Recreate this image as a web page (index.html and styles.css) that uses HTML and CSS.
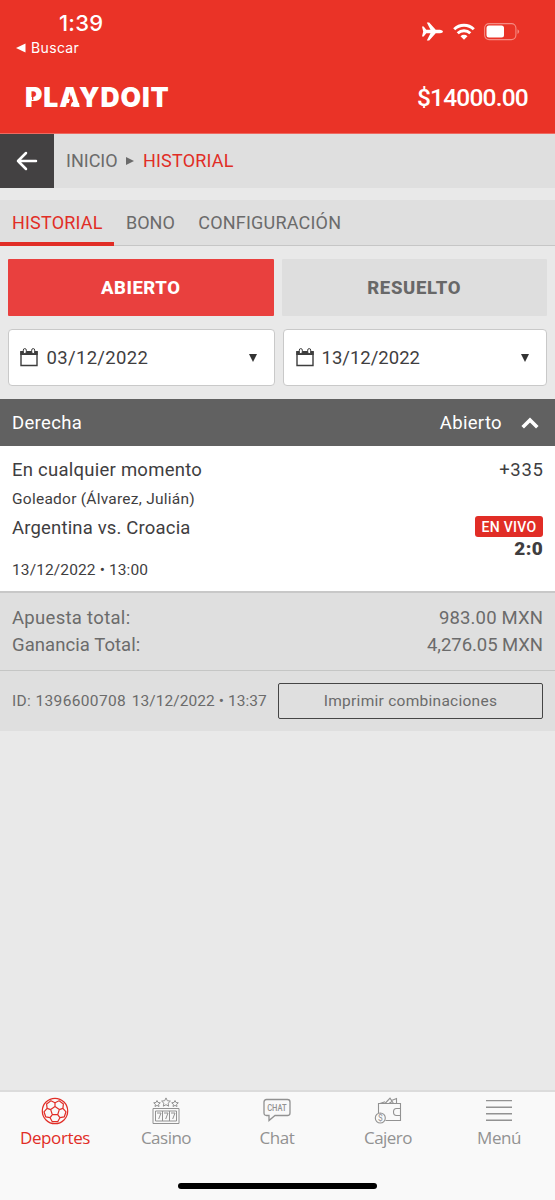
FILE: index.html
```html
<!DOCTYPE html>
<html lang="es">
<head>
<meta charset="utf-8">
<title>Playdoit – Historial</title>
<link rel="stylesheet" href="styles.css">
</head>
<body>
<div class="app">
  <header class="header">
    <div class="status">
      <div class="status-left">
        <span class="clock">1:39</span>
        <span class="back-app"><svg width="10" height="10" viewBox="0 0 10 10"><path d="M0 5 9.500 .5v9z" fill="#fff"/></svg><span class="search">Buscar</span></span>
      </div>
      <div class="status-icons">
        <svg width="21" height="19" viewBox="0 0 21 19"><path d="M0 4.500h1.700L4.300 7.700h4.200L4.800.5h2.400L13.700 7.700h4.300q3 .4 3 1.800t-3 1.800h-4.300L7.200 18.500H4.800L8.500 11.300H4.300l-2.600 3.200H0L1.200 9.500z" fill="#fff"/></svg>
        <svg class="wifi" width="22" height="17" viewBox="0 0 22 17" fill="none" stroke="#fff" stroke-width="2.900"><path d="M1.200 6.200a14 14 0 0 1 19.600 0M4.700 10.300a9 9 0 0 1 12.600 0"/><path d="M7.500 13.300a5 5 0 0 1 7 0L11 16.800z" fill="#fff" stroke="none"/></svg>
        <svg class="battery" width="36" height="18" viewBox="0 0 36 18"><rect x=".6" y=".6" width="31.300" height="16" rx="4.500" fill="none" stroke="#f58a82" stroke-width="1.100"/><rect x="2.500" y="2.500" width="17.500" height="12" rx="2.500" fill="#fff"/><path d="M33.500 6.200q1.600.7 1.600 2.400t-1.600 2.400z" fill="#f58a82"/></svg>
      </div>
    </div>
    <div class="brand">
      <div class="logo"><span class="wordmark">PLAYDOIT</span><svg class="cuts" width="60" height="20" viewBox="0 0 60 20"><path d="M6.700 8v5" stroke="#ea3327" stroke-width="1.300"/><path d="m45 8-3.300 12h2.300l1-3.500 2.200-2z" fill="#ea3327"/><path d="M45.600 16h7.500v3.500h-8.500z" fill="#fff"/></svg></div>
      <span class="balance">$14000.00</span>
    </div>
  </header>
  <nav class="crumbs">
    <span class="back"><svg width="22" height="20" viewBox="0 0 22 20" fill="none" stroke="#fff" stroke-width="2.500" stroke-linecap="round" stroke-linejoin="round"><path d="M20 10H2M10 2 2 10l8 8"/></svg></span>
    <span class="crumb home">INICIO</span>
    <svg class="sep" width="8" height="8" viewBox="0 0 8 8"><path d="M0 0 8 4 0 8z" fill="#6b6b6b"/></svg>
    <span class="crumb current">HISTORIAL</span>
  </nav>
  <nav class="tabs"><span class="tab active">HISTORIAL</span><span class="tab">BONO</span><span class="tab config">CONFIGURACIÓN</span></nav>
  <div class="filters">
    <button class="filter on">ABIERTO</button><button class="filter resuelto">RESUELTO</button>
  </div>
  <div class="dates">
    <div class="date"><svg width="18" height="19" viewBox="0 0 18 19"><path d="M1 4h16v13.500H1z" fill="none" stroke="#3d3d3d" stroke-width="1.400"/><path d="M.3 3h17.400v4H.3z" fill="#3d3d3d"/><rect x="3.300" y=".6" width="3" height="5" rx="1.500" fill="#fff" stroke="#3d3d3d"/><rect x="11.700" y=".6" width="3" height="5" rx="1.500" fill="#fff" stroke="#3d3d3d"/></svg><span class="d1">03/12/2022</span><svg class="caret" width="8" height="8" viewBox="0 0 8 8"><path d="M0 0h8L4 8z" fill="#333"/></svg></div>
    <div class="date second"><svg width="18" height="19" viewBox="0 0 18 19"><path d="M1 4h16v13.500H1z" fill="none" stroke="#3d3d3d" stroke-width="1.400"/><path d="M.3 3h17.400v4H.3z" fill="#3d3d3d"/><rect x="3.300" y=".6" width="3" height="5" rx="1.500" fill="#fff" stroke="#3d3d3d"/><rect x="11.700" y=".6" width="3" height="5" rx="1.500" fill="#fff" stroke="#3d3d3d"/></svg><span class="d2">13/12/2022</span><svg class="caret" width="8" height="8" viewBox="0 0 8 8"><path d="M0 0h8L4 8z" fill="#333"/></svg></div>
  </div>
  <section class="bet">
    <div class="bet-head"><span>Derecha</span><span class="state">Abierto</span><svg width="18" height="12" viewBox="0 0 18 12" fill="none" stroke="#fff" stroke-width="3.600"><path d="m1.700 10.300 7.300-7.300 7.300 7.300"/></svg></div>
    <div class="bet-body">
      <div class="row market"><span>En cualquier momento</span><span class="odds">+335</span></div>
      <div class="row pick"><span>Goleador (Álvarez, Julián)</span></div>
      <div class="row match"><span>Argentina vs. Croacia</span><span class="live">EN VIVO</span></div>
      <div class="row score"><span>2:0</span></div>
      <div class="row when"><span>13/12/2022 • 13:00</span></div>
    </div>
    <div class="totals">
      <div class="row"><span class="l1">Apuesta total:</span><span class="v1">983.00 MXN</span></div>
      <div class="row"><span class="l2">Ganancia Total:</span><span class="v2">4,276.05 MXN</span></div>
    </div>
    <div class="bet-foot"><span class="bet-id">ID: 1396600708</span><span class="bet-date">13/12/2022 • 13:37</span><button class="print">Imprimir combinaciones</button></div>
  </section>
  <footer class="bottom">
    <div class="items">
      <div class="item active"><svg width="28" height="28" viewBox="0 0 28 28" fill="none" stroke="currentColor" stroke-width="1.200"><circle cx="14" cy="14" r="12.700"/><path d="M14 9.500 18.300 12.600 16.700 17.600H11.300L9.700 12.600zM14 9.500V5.700M18.300 12.600l3.600-1.200M16.700 17.600l2.200 3.100M11.300 17.600l-2.200 3.100M9.700 12.600l-3.600-1.200"/><path d="M9.900 3.800 14 5.700 18.100 3.800 22.400 6.900 21.900 11.400 25 14.800 23.300 19.800 18.900 20.700 16.700 24.700H11.300L9.100 20.700 4.700 19.800 3 14.800 6.100 11.400 5.600 6.900z" stroke-linejoin="round"/></svg><span class="n1">Deportes</span></div>
      <div class="item"><svg width="28" height="28" viewBox="0 0 28 28" fill="none" stroke="currentColor"><path d="M1 11.500h26v15H1zM3.500 14h21v10h-21zM10.500 14v10M17.500 14v10"/><path d="M5 16h4l-2.300 6M12 16h4l-2.300 6M19 16h4l-2.300 6"/><path d="m14 .9 1.300 2.800 3.100.4-2.300 2.100.6 3-2.700-1.500-2.700 1.500.6-3-2.300-2.100 3.100-.4zM5 3.500l1 2 2.300.3-1.700 1.500.4 2.200-2-1.100-2 1.100.4-2.200L1.700 5.800 4 5.500zM23 3.500l1 2 2.300.3-1.700 1.500.4 2.200-2-1.100-2 1.100.4-2.200-1.700-1.500 2.300-.3z"/></svg><span class="n2">Casino</span></div>
      <div class="item"><svg width="28" height="28" viewBox="0 0 28 28" fill="none" stroke="currentColor" stroke-width="1.300"><path d="M3.500 2.500h21q2.500 0 2.500 2.500v11q0 2.500-2.500 2.500H12l-6 5v-5H3.500Q1 18.500 1 16V5q0-2.500 2.500-2.500z"/><text x="4.200" y="13.600" class="chat-label" textLength="19.500" lengthAdjust="spacingAndGlyphs">CHAT</text></svg><span class="n3">Chat</span></div>
      <div class="item"><svg width="28" height="28" viewBox="0 0 28 28" fill="none" stroke="currentColor" stroke-width="1.100"><path d="M4.500 16V6.500h22v17h-15M26.500 11.500h-4q-3 0-3 3.500t3 3.500h4M6 6.500l5-1.800M11 6.500l5-5.300 3.500 5.300M15 6.500l3-2M17.500 3.500l5-2v5"/><circle cx="6.300" cy="21" r="5"/><text x="6.300" y="24.200" class="coin" text-anchor="middle">$</text></svg><span class="n4">Cajero</span></div>
      <div class="item"><svg width="28" height="28" viewBox="0 0 28 28" fill="none" stroke="currentColor" stroke-width="1.400"><path d="M1 3.600h26M1 10.200h26M1 16.800h26M1 23.300h26"/></svg><span class="n5">Menú</span></div>
    </div>
    <div class="home-bar"></div>
  </footer>
</div>
</body>
</html>
```
FILE: styles.css
```css
* { box-sizing: border-box; }
body { margin: 0; background: #e9e9e9; font-family: Roboto, "Liberation Sans", sans-serif; color: #3f3e3f; font-size: 18px; }
button { font: inherit; margin: 0; padding: 0; border: 0; color: inherit; }
span { white-space: nowrap; }
svg { display: block; flex: none; }
.app { width: 555px; height: 1200px; display: flex; flex-direction: column; }

.header { height: 134px; background: #ea3327; color: #fff; border-bottom: 1px solid #ee6a61; }
.status { height: 62px; display: flex; justify-content: space-between; padding: 10px 35px 0 16px; }
.status-left { display: flex; flex-direction: column; font-family: Inter, sans-serif; }
.clock { font-size: 22px; line-height: 27px; font-weight: 500; padding-left: 43px; letter-spacing: .2px; }
.back-app { display: flex; align-items: center; gap: 5px; font-size: 14px; line-height: 22px; letter-spacing: .35px; }
.status-icons { display: flex; height: 19px; margin-top: 12px; align-items: center; }
.wifi { margin-left: 10px; }
.battery { margin-left: 9px; }
.brand { height: 71px; display: flex; justify-content: space-between; align-items: center; padding: 0 27px 0 25px; }
.logo { position: relative; font-family: Inter, sans-serif; font-weight: 900; font-size: 26.500px; letter-spacing: .9px; margin-top: -1px; }
.cuts { position: absolute; left: 1px; top: 6px; }
.balance { font-size: 24.500px; font-weight: 500; letter-spacing: -.8px; }

.crumbs { height: 54px; background: #dfdfdf; display: flex; align-items: center; color: #6b6b6b; }
.back { width: 54px; height: 54px; background: #434142; display: flex; align-items: center; justify-content: center; margin-right: 12px; }
.crumb { line-height: 20px; padding-bottom: 1px; }
.home { width: 60px; }
.current { color: #e12d26; margin-left: 9px; letter-spacing: .18px; }

.tabs { height: 58px; border-top: 12px solid #e9e9e9; border-bottom: 1px solid #c6c6c6; background: #dfdfdf; display: flex; line-height: 46px; color: #6b6b6b; }
.tab { height: 46px; margin-right: 24px; }
.tab.active { width: 114px; padding-left: 12px; margin-right: 12px; border-bottom: 4px solid #e12d26; color: #e12d26; letter-spacing: .18px; }
.config { letter-spacing: .2px; margin-left: -.5px; }
.filters { display: flex; gap: 8px; padding: 13px 8px 0; height: 70px; }
.filter { flex: 1; background: #dedede; color: #686868; font-size: 18.500px; font-weight: 800; border-radius: 1px; letter-spacing: .5px; }
.filter.on { background: #e9403e; color: #fff; }
.resuelto { letter-spacing: .7px; }
.dates { display: flex; gap: 8px; padding: 13px 8px; height: 83px; font-size: 18.500px; }
.date { width: 267px; height: 57px; background: #fff; border: 1px solid #c9c9c9; border-radius: 4px; display: flex; align-items: center; padding: 0 17px 0 11px; gap: 8.500px; }
.date.second { width: 264px; padding-left: 12px; gap: 7.500px; }
.d1 { letter-spacing: .33px; }
.d2 { letter-spacing: 0; }
.caret { margin-left: auto; }

.row { display: flex; justify-content: space-between; }
.bet-head { height: 47px; background: #616161; color: #fff; display: flex; align-items: center; padding: 0 16px 0 12px; font-size: 18.500px; letter-spacing: .33px; }
.state { margin-left: auto; margin-right: 19px; }
.bet-body { height: 145px; background: #fff; padding: 12px 12px 0; font-size: 18.500px; }
.market { height: 30px; line-height: 25px; letter-spacing: .25px; }
.odds { letter-spacing: .65px; margin-right: -.5px; }
.pick { height: 28px; font-size: 15.500px; line-height: 22px; letter-spacing: .25px; }
.match { height: 22px; line-height: 25px; letter-spacing: .17px; }
.live { background: #e12d26; color: #fff; font-size: 14px; font-weight: 500; width: 68px; height: 21px; border-radius: 3px; line-height: 22px; text-align: center; letter-spacing: .3px; }
.score { justify-content: flex-end; font-size: 19px; font-weight: 900; height: 22px; line-height: 22px; letter-spacing: .3px; }
.when { font-size: 15.500px; line-height: 20px; letter-spacing: .12px; }
.totals { height: 80px; background: #dfdfdf; border-top: 2px solid #c8c8c8; border-bottom: 1px solid #c5c6c5; padding: 12px 12px 0; line-height: 27px; color: #6b6b6b; font-size: 18.500px; }
.l1 { letter-spacing: .3px; }
.v1 { letter-spacing: .15px; }
.l2 { letter-spacing: .06px; }
.v2 { letter-spacing: -.05px; }
.bet-foot { height: 60px; background: #dfdfdf; color: #6b6b6b; display: flex; align-items: center; padding: 0 12px; font-size: 15.500px; }
.bet-id { letter-spacing: .36px; }
.bet-date { margin-left: 5.500px; letter-spacing: .07px; }
.print { width: 265px; height: 36px; border: 1px solid #454545; border-radius: 2px; background: none; margin-left: auto; letter-spacing: .27px; }

.bottom { margin-top: auto; height: 110px; background: #f9f9f9; border-top: 2px solid #dcdcdc; color: #929292; font-family: "Open Sans", sans-serif; }
.items { display: flex; height: 92px; }
.item { flex: 1; display: flex; flex-direction: column; align-items: center; padding: 5px 1px 0 0; font-size: 17px; line-height: 25px; }
.item.active { color: #e12d26; }
.n1 { letter-spacing: -.4px; }
.n2 { letter-spacing: -.5px; }
.n3 { letter-spacing: -.4px; }
.n4 { letter-spacing: -.55px; }
.n5 { letter-spacing: -.45px; }
.chat-label { font: 500 9px Roboto, sans-serif; fill: currentColor; stroke: none; }
.coin { font: 8.500px Roboto, sans-serif; fill: currentColor; stroke: none; }
.home-bar { width: 199px; height: 6px; border-radius: 3px; background: #000; margin: -1px auto 0; }
```
